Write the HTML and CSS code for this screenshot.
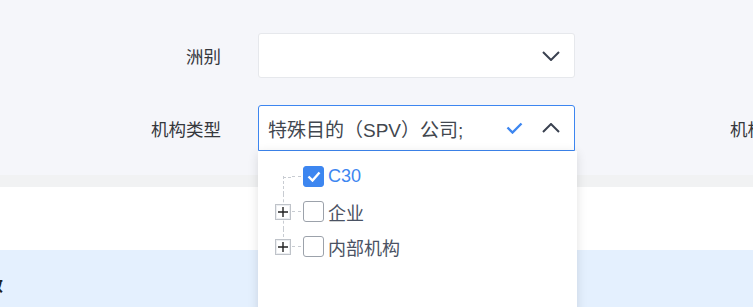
FILE: index.html
```html
<!DOCTYPE html>
<html lang="zh-CN">
<head>
    <meta charset="UTF-8">
    <meta name="viewport" content="width=device-width, initial-scale=1.0">
    <title>机构筛选</title>
    <link rel="stylesheet" href="styles.css">
</head>
<body>
    <div class="filter">
        <div class="form-row">
            <div class="form-item">
                <label class="form-label">洲别</label>
                <div class="select">
                    <span class="select-value"></span>
                    <svg class="arrow" width="18" height="10" viewBox="0 0 18 10"><path d="M1 1l8 8 8-8" fill="none" stroke="#3a4150" stroke-width="2"/></svg>
                </div>
            </div>
        </div>
        <div class="form-row">
            <div class="form-item">
                <label class="form-label">机构类型</label>
                <div class="select is-open">
                    <span class="select-value">特殊目的（SPV）公司;</span>
                    <svg class="ok" width="17" height="12" viewBox="0 0 17 12"><path d="M1.5 5.5l5 5 9-9" fill="none" stroke="#3d86f0" stroke-width="2.4"/></svg>
                    <svg class="arrow" width="18" height="10" viewBox="0 0 18 10"><path d="M1 9l8-8 8 8" fill="none" stroke="#3a4150" stroke-width="2"/></svg>

                    <div class="dropdown">
                        <div class="tree">
                            <div class="tree-row first">
                                <span class="switch blank"></span>
                                <span class="dash"></span>
                                <span class="check checked">
                                    <svg width="14" height="11" viewBox="0 0 14 11"><path d="M1.5 5.5l4 4 7-8" fill="none" stroke="#fff" stroke-width="2.4"/></svg>
                                </span>
                                <span class="node-text active">C30</span>
                            </div>
                            <div class="tree-row">
                                <span class="switch">
                                    <svg width="10" height="10" viewBox="0 0 10 10"><path d="M0 5h10M5 0v10" stroke="#222" stroke-width="1.4"/></svg>
                                </span>
                                <span class="dash"></span>
                                <span class="check"></span>
                                <span class="node-text">企业</span>
                            </div>
                            <div class="tree-row last">
                                <span class="switch">
                                    <svg width="10" height="10" viewBox="0 0 10 10"><path d="M0 5h10M5 0v10" stroke="#222" stroke-width="1.4"/></svg>
                                </span>
                                <span class="dash"></span>
                                <span class="check"></span>
                                <span class="node-text">内部机构</span>
                            </div>
                        </div>
                    </div>
                </div>
            </div>
            <div class="form-item">
                <label class="form-label">机构类型</label>
                <div class="select"></div>
            </div>
        </div>
    </div>

    <div class="divider"></div>
    <div class="panel"></div>
    <div class="table-head">
        <span class="th">效</span>
    </div>
</body>
</html>
```

FILE: styles.css
```css
html, body {
    margin: 0;
    overflow: hidden;
}
body {
    width: 753px;
    height: 307px;
    font-family: "Liberation Sans", "Noto Sans CJK SC", sans-serif;
    color: #333;
    background: #fff;
}
.filter {
    background: #f5f6fa;
    height: 175px;
    padding-top: 33px;
    box-sizing: border-box;
}
.form-row {
    display: flex;
    gap: 4px;
    margin-bottom: 27px;
    white-space: nowrap;
}
.form-item {
    display: flex;
    align-items: center;
    gap: 37px;
    flex: none;
    width: 575px;
}
.form-label {
    width: 221px;
    text-align: right;
    font-size: 17.5px;
    color: #35383d;
    flex: none;
}
.select {
    position: relative;
    width: 317px;
    height: 45px;
    box-sizing: border-box;
    background: #fff;
    border: 1px solid #e6e8ec;
    border-radius: 3px;
    display: flex;
    align-items: center;
    padding: 0 14px 0 9px;
    flex: none;
}
.select.is-open {
    height: 46px;
    border-color: #3d86f0;
    border-radius: 3px 3px 0 0;
}
.select-value {
    flex: 1;
    font-size: 19px;
    color: #42474f;
}
.select .ok {
    margin-right: 19px;
}
.dropdown {
    position: absolute;
    top: 45px;
    left: -1px;
    width: 319px;
    height: 200px;
    background: #fff;
    box-shadow: 0 2px 10px rgba(0, 0, 0, 0.12);
    z-index: 5;
}
.tree {
    padding-top: 8px;
}
.tree-row {
    position: relative;
    display: flex;
    align-items: center;
    height: 35px;
    padding-left: 17px;
}
.tree-row::before {
    content: "";
    position: absolute;
    left: 25px;
    top: 0;
    bottom: 0;
    border-left: 1px dashed #c8ccd2;
}
.tree-row.first::before {
    top: 17px;
}
.tree-row.last::before {
    bottom: 17px;
}
.switch {
    position: relative;
    z-index: 1;
    width: 16px;
    height: 16px;
    box-sizing: border-box;
    border: 1px solid #bfc3c9;
    box-shadow: inset 0 0 0 1px #eceef1;
    background: #fff;
    display: flex;
    align-items: center;
    justify-content: center;
    flex: none;
}
.switch.blank {
    border: 0;
    box-shadow: none;
    background: none;
}
.switch.blank::after {
    content: "";
    position: absolute;
    left: 8px;
    right: 0;
    top: 8px;
    border-top: 1px dashed #c8ccd2;
}
.dash {
    width: 9px;
    border-top: 1px dashed #c8ccd2;
    margin: 0 2px 0 1px;
    flex: none;
}
.check {
    width: 21px;
    height: 21px;
    box-sizing: border-box;
    border: 1px solid #9ca2ab;
    border-radius: 3px;
    background: #fff;
    display: flex;
    align-items: center;
    justify-content: center;
    flex: none;
}
.check.checked {
    background: #3d86f0;
    border-color: #3d86f0;
}
.node-text {
    margin-left: 4px;
    font-size: 18px;
    color: #4a5263;
}
.node-text.active {
    color: #3d86f0;
}
.divider {
    height: 12px;
    background: #f1f2f3;
}
.panel {
    height: 63px;
    background: #fff;
}
.table-head {
    height: 57px;
    background: #e4f0fe;
    display: flex;
    align-items: center;
    padding-top: 10px;
    box-sizing: border-box;
    overflow: hidden;
}
.th {
    margin-left: -13px;
    font-size: 16px;
    font-weight: bold;
    color: #222;
}
```
